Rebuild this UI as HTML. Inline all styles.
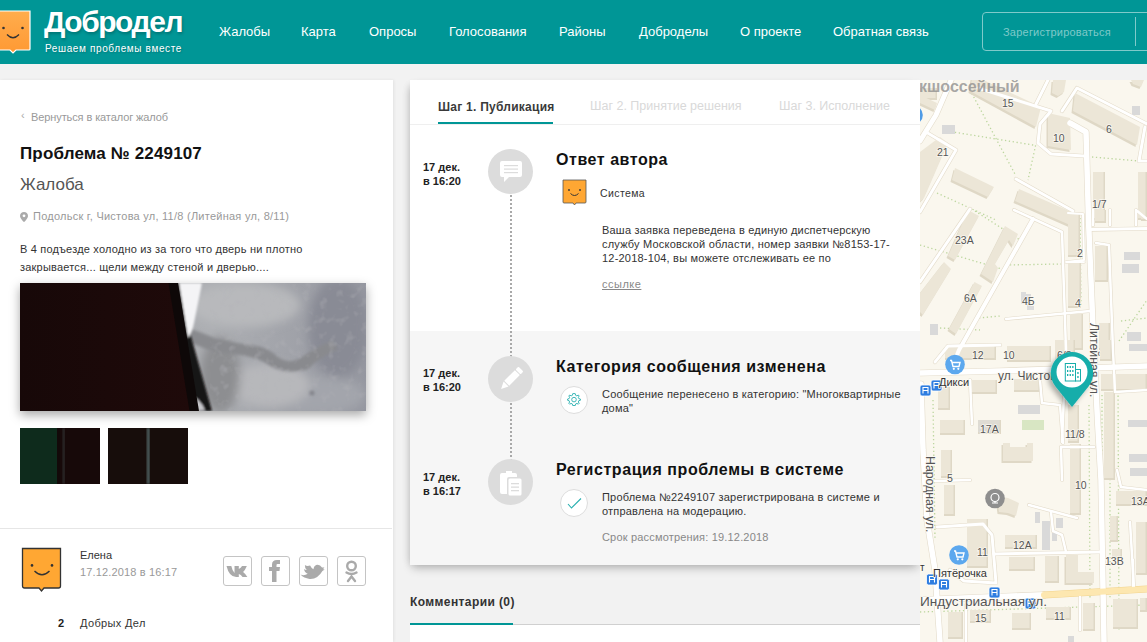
<!DOCTYPE html>
<html><head><meta charset="utf-8">
<style>
*{margin:0;padding:0;box-sizing:border-box}
html,body{width:1147px;height:642px;overflow:hidden;background:#f2f2f2;font-family:"Liberation Sans",sans-serif;color:#222}
.abs{position:absolute}
#hdr{position:absolute;left:0;top:0;width:1147px;height:64px;background:#009696}
.nav{position:absolute;top:24px;font-size:13px;color:#fff;white-space:nowrap}
#left{position:absolute;left:0;top:80px;width:393px;height:562px;background:#fff;box-shadow:1px 0 3px rgba(0,0,0,.07)}
#mid{position:absolute;left:410px;top:80px;width:510px;height:485px;background:#fff;box-shadow:0 5px 9px -2px rgba(0,0,0,.24),-4px 2px 8px -4px rgba(0,0,0,.14)}
#map{position:absolute;left:920px;top:80px;width:227px;height:562px;background:#f8f4e8;overflow:hidden}
.t{position:absolute;white-space:nowrap}
</style></head><body>
<div id="hdr">
  <svg class="abs" style="left:0;top:10px" width="34" height="46" viewBox="0 0 34 46">
    <defs><linearGradient id="og" x1="0" y1="0" x2="0" y2="1"><stop offset="0" stop-color="#ffad4d"/><stop offset="1" stop-color="#ff9933"/></linearGradient></defs>
    <path d="M-2 1 H30 V39 Q30 40 29 40 H16 L13 43 L10 40 H-2 Z" fill="url(#og)" stroke="#fff" stroke-width="1.2"/>
    <circle cx="3.5" cy="18" r="1.3" fill="#333"/><circle cx="22.5" cy="18" r="1.3" fill="#333"/>
    <path d="M7 24.5 Q13 31 19 24.5" fill="none" stroke="#333" stroke-width="1.3"/>
  </svg>
  <div class="t" style="left:44px;top:5px;font-size:30px;font-weight:bold;color:#fff;letter-spacing:-1.45px;text-shadow:1px 2px 3px rgba(0,0,0,.22)">Добродел</div>
  <div class="t" style="left:45px;top:43px;font-size:10px;color:#fff;letter-spacing:0.62px;text-shadow:1px 1px 2px rgba(0,0,0,.2)">Решаем проблемы вместе</div>
  <div class="nav" style="left:219px">Жалобы</div>
  <div class="nav" style="left:301px">Карта</div>
  <div class="nav" style="left:369px">Опросы</div>
  <div class="nav" style="left:449px">Голосования</div>
  <div class="nav" style="left:559px">Районы</div>
  <div class="nav" style="left:639px">Доброделы</div>
  <div class="nav" style="left:740px">О проекте</div>
  <div class="nav" style="left:833px">Обратная связь</div>
  <div class="abs" style="left:982px;top:12px;width:200px;height:39px;border:1px solid #7fcaca;border-radius:4px"></div>
  <div class="abs" style="left:1135px;top:17px;width:1px;height:29px;background:#7fcaca"></div>
  <div class="t" style="left:1003px;top:26px;font-size:11px;color:#7fc9c9;letter-spacing:0.22px">Зарегистрироваться</div>
</div>

<div id="left">
  <div class="t" style="left:21px;top:29px;font-size:11px;color:#aaa">&#8249;</div>
  <div class="t" style="left:31px;top:31px;font-size:11px;color:#999;letter-spacing:-0.1px">Вернуться в каталог жалоб</div>
  <div class="t" style="left:20px;top:64px;font-size:17px;font-weight:bold;color:#111;letter-spacing:0.15px">Проблема № 2249107</div>
  <div class="t" style="left:20px;top:95px;font-size:17px;color:#555">Жалоба</div>
  <svg class="abs" style="left:20px;top:132px" width="8" height="10" viewBox="0 0 8 10"><path d="M4 0C1.8 0 0 1.7 0 3.9 0 6.6 4 10 4 10S8 6.6 8 3.9C8 1.7 6.2 0 4 0Z" fill="#aaa"/><circle cx="4" cy="3.8" r="1.4" fill="#fff"/></svg>
  <div class="t" style="left:33px;top:130px;font-size:11px;color:#999;letter-spacing:0.25px">Подольск г, Чистова ул, 11/8 (Литейная ул, 8/11)</div>
  <div class="t" style="left:20px;top:161px;font-size:11px;color:#333;line-height:17.5px;letter-spacing:0.2px">В 4 подъезде холодно из за того что дверь ни плотно<br>закрывается... щели между стеной и дверью....</div>
  <div class="abs" style="left:20px;top:203px;width:346px;height:128px;box-shadow:0 4px 10px rgba(0,0,0,.35)">
   <svg width="346" height="128" viewBox="0 0 346 128" style="display:block">
    <defs>
     <filter id="bl" x="-20%" y="-20%" width="140%" height="140%"><feGaussianBlur stdDeviation="1.2"/></filter>
     <filter id="bl2" x="-50%" y="-50%" width="200%" height="200%"><feGaussianBlur stdDeviation="5"/></filter>
     <filter id="bl4" x="-50%" y="-50%" width="200%" height="200%"><feGaussianBlur stdDeviation="1.8"/></filter>
     <filter id="tex" x="0" y="0" width="100%" height="100%"><feTurbulence type="fractalNoise" baseFrequency="0.12" numOctaves="2" seed="3"/><feColorMatrix type="matrix" values="0 0 0 0 0.45  0 0 0 0 0.45  0 0 0 0 0.48  0 0 0 -1.6 0.75"/><feGaussianBlur stdDeviation="0.6"/></filter>
     <linearGradient id="wall" x1="0" y1="0" x2="1" y2="0"><stop offset="0" stop-color="#a6a7ab"/><stop offset="0.55" stop-color="#adafb3"/><stop offset="1" stop-color="#9597a0"/></linearGradient>
     <linearGradient id="door" x1="0" y1="0" x2="1" y2="0"><stop offset="0" stop-color="#170808"/><stop offset="1" stop-color="#1f0a0a"/></linearGradient>
    </defs>
    <rect width="346" height="128" fill="url(#wall)"/>
    <g filter="url(#bl2)">
     <ellipse cx="225" cy="22" rx="55" ry="22" fill="#b8b9bc"/>
     <ellipse cx="318" cy="45" rx="30" ry="50" fill="#898b95"/>
     <ellipse cx="300" cy="112" rx="45" ry="18" fill="#a3a5ac"/>
     <ellipse cx="250" cy="102" rx="40" ry="22" fill="#b7b8bb"/>
     <ellipse cx="200" cy="92" rx="20" ry="38" fill="#8d8e91"/>
    </g>
    
    <g filter="url(#bl4)">
     <path d="M166 45 Q180 48 196 56 Q215 60 232 62 Q248 64 258 74 Q270 82 282 74 Q296 64 312 58 L318 66 Q300 74 288 86 Q268 92 252 84 Q238 74 220 72 Q200 70 186 66 L166 58 Z" fill="#898a8e"/>
     <circle cx="292" cy="110" r="2.5" fill="#808188"/>
    </g>
    <rect x="190" y="0" width="156" height="128" filter="url(#tex)" opacity="0.7"/>
    <g filter="url(#bl)">
     <path d="M157 0 L182 0 Q172 25 170 50 L192 128 L169 128 Z" fill="#161212"/>
     <path d="M159 0 L182 0 Q178 20 174 40 Q172 50 168 55 Z" fill="#f4f4f6"/>
     <path d="M170 112 Q180 115 185 127 L176 128 Z" fill="#c8c8cc"/>
    </g>
    <path d="M0 0 L151 0 L172 128 L0 128 Z" fill="url(#door)"/>
    <path d="M148.5 0 L158 0 L179 128 L169.5 128 Z" fill="#0e0808"/>
   </svg>
  </div>
  <svg class="abs" style="left:20px;top:348px" width="80" height="56" viewBox="0 0 80 56">
   <defs><filter id="bl3"><feGaussianBlur stdDeviation="0.8"/></filter></defs>
   <rect width="80" height="56" fill="#130909"/>
   <rect width="37" height="56" fill="#0e2b1c"/>
   <rect x="43" y="0" width="1.5" height="56" fill="#3d4a48" filter="url(#bl3)"/><rect x="40" y="0" width="40" height="56" fill="#2a0c0a" opacity="0.2"/>
  </svg>
  <svg class="abs" style="left:108px;top:348px" width="80" height="56" viewBox="0 0 80 56">
   <rect width="80" height="56" fill="#170d0b"/>
   <rect x="39" y="0" width="2.5" height="56" fill="#55686a" filter="url(#bl3)"/>
  </svg>
  <div class="abs" style="left:0;top:448px;width:392px;height:1px;background:#e6e6e6"></div>
  <svg class="abs" style="left:21px;top:467px" width="42" height="46" viewBox="0 0 42 46">
   <path d="M1.5 1.5 H39.5 V39 Q39.5 41 37.5 41 H23 L20.5 44 L18 41 H3.5 Q1.5 41 1.5 39 Z" fill="#ffa733" stroke="#333" stroke-width="1.3"/>
   <circle cx="11" cy="18.4" r="1.3" fill="#333"/><circle cx="31" cy="18.4" r="1.3" fill="#333"/>
   <path d="M13.5 24 Q21 31.5 28.5 24" fill="none" stroke="#333" stroke-width="1.4"/>
  </svg>
  <div class="t" style="left:80px;top:469px;font-size:11px;color:#333">Елена</div>
  <div class="t" style="left:80px;top:486px;font-size:11px;color:#999;letter-spacing:0.15px">17.12.2018 в 16:17</div>
  <div class="abs" style="left:223px;top:476px;width:29px;height:30px;border:1px solid #c4c4c4;border-radius:3px"></div>
  <div class="abs" style="left:261px;top:476px;width:29px;height:30px;border:1px solid #c4c4c4;border-radius:3px"></div>
  <div class="abs" style="left:299px;top:476px;width:29px;height:30px;border:1px solid #c4c4c4;border-radius:3px"></div>
  <div class="abs" style="left:337px;top:476px;width:29px;height:30px;border:1px solid #c4c4c4;border-radius:3px"></div>
  <svg class="abs" style="left:223px;top:476px" width="144" height="30" viewBox="0 0 144 30">
   <path transform="translate(3.5 0) scale(1.07 1) translate(-3.5 0)" d="M3.5 10 H8 Q9 15 11 17 V10 H15 V13 Q17 12 18 10 H22.5 Q21 14 19 16 Q21.5 18 23 21 H18.5 Q17 18.5 15 18 V21 H12.5 Q6 21 3.5 10Z" fill="#aaa"/>
   <path transform="translate(1 0)" d="M48 26 V15 H45 V11 H48 V8.5 Q48 4 53 4 H56 V8 H53.5 Q52.5 8 52.5 9 V11 H56 L55.5 15 H52.5 V26Z" fill="#aaa"/>
   <path transform="translate(-2.5 -0.5) rotate(12 93 16) translate(93 16) scale(1.15) translate(-93 -16)" d="M89 11.5 Q86.5 13 84.5 12 Q85 15 87 16 Q85.5 16 84.5 15.5 Q85.5 18.5 88.5 19 Q86 21.5 82.5 21 Q86 23.5 91 23 Q98 22 100.5 14 Q101.5 13 102 12 Q101 12.3 100.5 12.3 Q101.5 11.5 101.5 10.5 Q100.5 11 99.5 11 Q97 8.5 94 10 Q92 11.5 92.5 14 Q90.5 13.5 89 11.5Z" fill="#aaa"/>
   <circle cx="128.5" cy="10" r="4.3" fill="none" stroke="#aaa" stroke-width="2.4"/>
   <path d="M123.5 16.5 Q128.5 19.5 133.5 16.5" fill="none" stroke="#aaa" stroke-width="2.4" stroke-linecap="round"/>
   <path d="M125 25 L128.5 20.5 L132 25" fill="none" stroke="#aaa" stroke-width="2.4" stroke-linecap="round"/>
  </svg>
  <div class="t" style="left:58px;top:537px;font-size:11px;font-weight:bold;color:#222">2</div>
  <div class="t" style="left:80px;top:537px;font-size:11px;color:#333;letter-spacing:0.35px">Добрых Дел</div>
</div>
<div id="mid">
  <div class="abs" style="left:0;top:251px;width:510px;height:234px;background:#f6f6f6"></div>
  <div class="t" style="left:28px;top:19.5px;font-size:12px;font-weight:bold;color:#3a3a3a;letter-spacing:0.25px">Шаг 1. Публикация</div>
  <div class="abs" style="left:28px;top:42px;width:115px;height:2px;background:#009696"></div>
  <div class="t" style="left:180px;top:19px;font-size:12.5px;color:#d9d9d9">Шаг 2. Принятие решения</div>
  <div class="t" style="left:369px;top:19px;font-size:12.5px;color:#d9d9d9">Шаг 3. Исполнение</div>
  <div class="abs" style="left:0;top:44px;width:510px;height:1px;background:#efefef"></div>
  <div class="abs" style="left:100px;top:115px;width:2px;height:265px;background:repeating-linear-gradient(to bottom,#a9a9a9 0,#a9a9a9 2px,transparent 2px,transparent 4px)"></div>

  <div class="t" style="left:13px;top:79.5px;font-size:11px;font-weight:bold;color:#222;line-height:14px">17 дек.<br>в 16:20</div>
  <div class="abs" style="left:78px;top:69px;width:45px;height:45px;border-radius:50%;background:#dcdcdc"></div>
  <svg class="abs" style="left:89px;top:80px" width="24" height="26" viewBox="0 0 24 26"><path d="M1 3 Q1 1 3 1 H21 Q23 1 23 3 V15 Q23 17 21 17 H10 L5 22 V17 H3 Q1 17 1 15Z" fill="#fff"/><rect x="5" y="5" width="14" height="1.2" fill="#dcdcdc"/><rect x="5" y="8.5" width="14" height="1.2" fill="#dcdcdc"/><rect x="5" y="12" width="14" height="1.2" fill="#dcdcdc"/></svg>
  <div class="t" style="left:146px;top:71px;font-size:16px;font-weight:bold;color:#111;letter-spacing:0.55px">Ответ автора</div>
  <svg class="abs" style="left:152px;top:99px" width="26" height="28" viewBox="0 0 26 28"><path d="M1 1 H24 V23 Q24 24 23 24 H14 L12.5 26 L11 24 H2 Q1 24 1 23Z" fill="#ffa733" stroke="#555" stroke-width="0.8"/><circle cx="7" cy="11" r="0.9" fill="#333"/><circle cx="18" cy="11" r="0.9" fill="#333"/><path d="M8.5 14.5 Q12.5 18.5 16.5 14.5" fill="none" stroke="#333" stroke-width="1"/></svg>
  <div class="t" style="left:190px;top:107px;font-size:10.5px;color:#333;letter-spacing:0.4px">Система</div>
  <div class="t" style="left:192px;top:143px;font-size:11px;color:#333;line-height:14px;letter-spacing:0.2px">Ваша заявка переведена в единую диспетчерскую<br>службу Московской области, номер заявки №8153-17-<br>12-2018-104, вы можете отслеживать ее по</div>
  <div class="t" style="left:192px;top:198px;font-size:11px;color:#888;text-decoration:underline;letter-spacing:0.5px">ссылке</div>

  <div class="t" style="left:13px;top:286px;font-size:11px;font-weight:bold;color:#222;line-height:14px">17 дек.<br>в 16:20</div>
  <div class="abs" style="left:78px;top:276px;width:45px;height:46px;border-radius:50%;background:#dcdcdc"></div>
  <svg class="abs" style="left:86px;top:284px" width="30" height="30" viewBox="0 0 30 30"><g transform="rotate(45 15 15)"><rect x="11.5" y="1" width="7" height="4" rx="1" fill="#fff"/><rect x="11.5" y="6" width="7" height="15" fill="#fff"/><path d="M11.5 22 H18.5 L15 29 Z" fill="#fff"/></g></svg>
  <div class="t" style="left:146px;top:278px;font-size:16px;font-weight:bold;color:#111;letter-spacing:0.55px">Категория сообщения изменена</div>
  <div class="abs" style="left:150px;top:306px;width:28px;height:28px;border-radius:50%;background:#fff;border:1px solid #ddd"></div>
  <svg class="abs" style="left:156px;top:312px" width="16" height="16" viewBox="0 0 16 16"><path d="M8 1.5 L9.3 1.7 L9.6 3.3 L10.9 3.9 L12.3 3 L13.2 4 L12.3 5.3 L12.8 6.6 L14.4 7 V8.3 L12.8 8.7 L12.3 10 L13.2 11.3 L12.3 12.2 L11 11.4 L9.7 11.9 L9.3 13.5 H8 H6.7 L6.3 11.9 L5 11.4 L3.7 12.2 L2.8 11.3 L3.6 10 L3.1 8.7 L1.6 8.3 V7 L3.1 6.6 L3.6 5.3 L2.8 4 L3.7 3 L5.1 3.9 L6.4 3.3 L6.7 1.7 Z" fill="none" stroke="#2ab0b0" stroke-width="0.9"/><circle cx="8" cy="7.6" r="2.3" fill="none" stroke="#2ab0b0" stroke-width="0.9"/></svg>
  <div class="t" style="left:192px;top:307px;font-size:11px;color:#333;line-height:14px;letter-spacing:0.2px">Сообщение перенесено в категорию: "Многоквартирные<br>дома"</div>

  <div class="t" style="left:13px;top:389.5px;font-size:11px;font-weight:bold;color:#222;line-height:14px">17 дек.<br>в 16:17</div>
  <div class="abs" style="left:78px;top:379px;width:45px;height:46px;border-radius:50%;background:#dcdcdc"></div>
  <svg class="abs" style="left:88px;top:388px" width="26" height="30" viewBox="0 0 26 30"><path d="M2 7 Q2 5 4 5 H8 V3 H14 V5 H17 Q19 5 19 7 V9 H11 Q9 9 9 11 V26 H4 Q2 26 2 24 Z" fill="#fff"/><rect x="10.5" y="10.5" width="13" height="17" rx="1.5" fill="#fff"/><rect x="13" y="15" width="8" height="1.3" fill="#dcdcdc"/><rect x="13" y="18.5" width="8" height="1.3" fill="#dcdcdc"/><rect x="13" y="22" width="8" height="1.3" fill="#dcdcdc"/></svg>
  <div class="t" style="left:146px;top:381px;font-size:16px;font-weight:bold;color:#111;letter-spacing:0.57px">Регистрация проблемы в системе</div>
  <div class="abs" style="left:150px;top:409px;width:28px;height:28px;border-radius:50%;background:#fff;border:1px solid #ddd"></div>
  <svg class="abs" style="left:156px;top:415px" width="16" height="16" viewBox="0 0 16 16"><path d="M2 9 L5.5 13 L15 3.5" fill="none" stroke="#2ab0b0" stroke-width="1.1"/></svg>
  <div class="t" style="left:192px;top:410px;font-size:11px;color:#333;line-height:14px;letter-spacing:0.2px">Проблема №2249107 зарегистрирована в системе и<br>отправлена на модерацию.</div>
  <div class="t" style="left:192px;top:451px;font-size:11px;color:#888;letter-spacing:0.18px">Срок рассмотрения: 19.12.2018</div>
</div>
<div class="t" style="left:410px;top:594.5px;font-size:12px;font-weight:bold;color:#333;letter-spacing:0.4px">Комментарии (0)</div>
<div class="abs" style="left:410px;top:624px;width:510px;height:1px;background:#d0d0d0"></div>
<div class="abs" style="left:410px;top:622.5px;width:103px;height:2.5px;background:#009696"></div>
<div class="abs" style="left:410px;top:625px;width:510px;height:17px;background:#fff"></div>
<div id="map"><svg width="227" height="562" viewBox="920 80 227 562" style="display:block;font-family:'Liberation Sans',sans-serif"><defs><filter id="msh" x="-50%" y="-50%" width="200%" height="200%"><feDropShadow dx="-3" dy="3" stdDeviation="2.5" flood-color="#000" flood-opacity="0.3"/></filter></defs><rect x="920" y="80" width="227" height="562" fill="#faf7ee"/><path d="M954.9 132.3 L1035.6 145.4" fill="none" stroke="#bcd69e" stroke-width="1.3" stroke-dasharray="1.3 2.6"/><path d="M970.0 90.0 L1016.0 176.0" fill="none" stroke="#bcd69e" stroke-width="1.3" stroke-dasharray="1.3 2.6"/><path d="M1035.6 145.4 L1028.0 180.0" fill="none" stroke="#bcd69e" stroke-width="1.3" stroke-dasharray="1.3 2.6"/><path d="M1092.0 157.0 L1139.0 161.0" fill="none" stroke="#bcd69e" stroke-width="1.3" stroke-dasharray="1.3 2.6"/><path d="M937.0 193.0 L996.0 220.0" fill="none" stroke="#bcd69e" stroke-width="1.3" stroke-dasharray="1.3 2.6"/><path d="M975.0 211.0 L1020.0 240.0" fill="none" stroke="#bcd69e" stroke-width="1.3" stroke-dasharray="1.3 2.6"/><path d="M920.0 245.0 L1005.0 270.0" fill="none" stroke="#bcd69e" stroke-width="1.3" stroke-dasharray="1.3 2.6"/><path d="M1006.0 265.0 L1061.0 264.0" fill="none" stroke="#bcd69e" stroke-width="1.3" stroke-dasharray="1.3 2.6"/><path d="M940.0 328.0 L980.0 330.0" fill="none" stroke="#bcd69e" stroke-width="1.3" stroke-dasharray="1.3 2.6"/><path d="M979.0 318.0 L1000.0 316.0" fill="none" stroke="#bcd69e" stroke-width="1.3" stroke-dasharray="1.3 2.6"/><path d="M1121.0 321.0 L1147.0 318.0" fill="none" stroke="#bcd69e" stroke-width="1.3" stroke-dasharray="1.3 2.6"/><path d="M1119.0 341.0 L1147.0 300.0" fill="none" stroke="#bcd69e" stroke-width="1.3" stroke-dasharray="1.3 2.6"/><path d="M1080.0 218.0 L1081.0 306.0" fill="none" stroke="#bcd69e" stroke-width="1.3" stroke-dasharray="1.3 2.6"/><path d="M1102.0 395.0 L1102.0 480.0" fill="none" stroke="#bcd69e" stroke-width="1.3" stroke-dasharray="1.3 2.6"/><path d="M1089.0 405.0 L1090.0 600.0" fill="none" stroke="#bcd69e" stroke-width="1.3" stroke-dasharray="1.3 2.6"/><path d="M1118.0 380.0 L1119.0 630.0" fill="none" stroke="#bcd69e" stroke-width="1.3" stroke-dasharray="1.3 2.6"/><path d="M933.0 400.0 L935.0 540.0" fill="none" stroke="#bcd69e" stroke-width="1.3" stroke-dasharray="1.3 2.6"/><path d="M920.0 598.0 L1147.0 590.0" fill="none" stroke="#bcd69e" stroke-width="1.3" stroke-dasharray="1.3 2.6"/><path d="M920.0 612.0 L1147.0 605.0" fill="none" stroke="#bcd69e" stroke-width="1.3" stroke-dasharray="1.3 2.6"/><path d="M1110.0 440.0 L1110.0 600.0" fill="none" stroke="#bcd69e" stroke-width="1.3" stroke-dasharray="1.3 2.6"/><path d="M1141.0 180.0 L1141.0 220.0" fill="none" stroke="#bcd69e" stroke-width="1.3" stroke-dasharray="1.3 2.6"/><path d="M952.0 78.0 L936.0 115.0 L920.0 141.0" fill="none" stroke="#e4dccb" stroke-width="6.2" stroke-linejoin="round" stroke-linecap="round"/><path d="M926.0 132.0 L956.0 150.0 L920.0 212.0" fill="none" stroke="#e4dccb" stroke-width="4.2" stroke-linejoin="round" stroke-linecap="round"/><path d="M1036.0 104.0 L1049.0 78.0" fill="none" stroke="#e4dccb" stroke-width="4.2" stroke-linejoin="round" stroke-linecap="round"/><path d="M978.0 88.0 L1051.0 111.0 L1040.0 124.0 L1038.0 143.0 L1051.0 154.0 L1084.0 156.0" fill="none" stroke="#e4dccb" stroke-width="4.2" stroke-linejoin="round" stroke-linecap="round"/><path d="M1070.0 123.0 L1086.0 132.0 L1088.5 220.0 L1093.5 340.0 L1097.5 420.0 L1101.0 480.0 L1104.0 642.0" fill="none" stroke="#e4dccb" stroke-width="6.7" stroke-linejoin="round" stroke-linecap="round"/><path d="M1062.0 111.0 L1077.0 88.0 L1147.0 124.0" fill="none" stroke="#e4dccb" stroke-width="4.2" stroke-linejoin="round" stroke-linecap="round"/><path d="M1145.0 127.0 L1139.0 161.0 L1147.0 161.0" fill="none" stroke="#e4dccb" stroke-width="4.2" stroke-linejoin="round" stroke-linecap="round"/><path d="M1016.0 179.0 L1073.0 211.0" fill="none" stroke="#e4dccb" stroke-width="4.2" stroke-linejoin="round" stroke-linecap="round"/><path d="M1014.0 210.0 L1062.0 232.0 L1066.0 350.0 L1062.0 442.0" fill="none" stroke="#e4dccb" stroke-width="3.7" stroke-linejoin="round" stroke-linecap="round"/><path d="M920.0 282.0 L970.0 209.0" fill="none" stroke="#e4dccb" stroke-width="4.2" stroke-linejoin="round" stroke-linecap="round"/><path d="M1033.0 219.0 L959.0 350.0 L950.0 372.0" fill="none" stroke="#e4dccb" stroke-width="5.2" stroke-linejoin="round" stroke-linecap="round"/><path d="M1006.0 319.0 L1090.0 311.0" fill="none" stroke="#e4dccb" stroke-width="3.7" stroke-linejoin="round" stroke-linecap="round"/><path d="M1090.0 229.6 L1147.0 228.5" fill="none" stroke="#e4dccb" stroke-width="4.2" stroke-linejoin="round" stroke-linecap="round"/><path d="M1096.0 243.0 L1109.0 245.0 L1113.0 350.0 L1115.0 392.0 L1147.0 390.0" fill="none" stroke="#e4dccb" stroke-width="3.7" stroke-linejoin="round" stroke-linecap="round"/><path d="M1093.0 225.0 L1093.0 210.0" fill="none" stroke="#e4dccb" stroke-width="3.7" stroke-linejoin="round" stroke-linecap="round"/><path d="M1110.0 225.0 L1110.0 210.0" fill="none" stroke="#e4dccb" stroke-width="3.7" stroke-linejoin="round" stroke-linecap="round"/><path d="M1136.0 225.0 L1136.0 210.0 L1147.0 219.0" fill="none" stroke="#e4dccb" stroke-width="3.7" stroke-linejoin="round" stroke-linecap="round"/><path d="M1068.0 213.0 L1083.0 214.0 L1084.0 260.0 L1066.0 262.0 L1084.0 262.0" fill="none" stroke="#e4dccb" stroke-width="3.2" stroke-linejoin="round" stroke-linecap="round"/><path d="M920.0 373.0 L1000.0 371.0 L1147.0 366.0" fill="none" stroke="#e4dccb" stroke-width="6.7" stroke-linejoin="round" stroke-linecap="round"/><path d="M935.0 362.0 L948.0 346.0 L1000.0 345.0" fill="none" stroke="#e4dccb" stroke-width="4.2" stroke-linejoin="round" stroke-linecap="round"/><path d="M970.0 380.0 L972.0 424.0" fill="none" stroke="#e4dccb" stroke-width="3.7" stroke-linejoin="round" stroke-linecap="round"/><path d="M1040.0 380.0 L1042.0 403.0 L1060.0 405.0 L1063.0 443.0" fill="none" stroke="#e4dccb" stroke-width="3.7" stroke-linejoin="round" stroke-linecap="round"/><path d="M1061.0 447.0 L1094.0 447.0" fill="none" stroke="#e4dccb" stroke-width="3.7" stroke-linejoin="round" stroke-linecap="round"/><path d="M1061.0 447.0 L1062.0 480.0" fill="none" stroke="#e4dccb" stroke-width="3.7" stroke-linejoin="round" stroke-linecap="round"/><path d="M921.0 384.0 L923.0 450.0 L927.0 520.0 L935.0 570.0 L940.0 642.0" fill="none" stroke="#e4dccb" stroke-width="6.7" stroke-linejoin="round" stroke-linecap="round"/><path d="M935.0 481.0 L970.0 480.0" fill="none" stroke="#e4dccb" stroke-width="3.7" stroke-linejoin="round" stroke-linecap="round"/><path d="M1029.0 505.0 L1077.0 518.0" fill="none" stroke="#e4dccb" stroke-width="3.7" stroke-linejoin="round" stroke-linecap="round"/><path d="M1051.0 512.0 L1053.0 531.0 L1062.0 535.0 L1066.0 552.0" fill="none" stroke="#e4dccb" stroke-width="3.7" stroke-linejoin="round" stroke-linecap="round"/><path d="M994.0 554.0 L1099.0 552.0" fill="none" stroke="#e4dccb" stroke-width="4.2" stroke-linejoin="round" stroke-linecap="round"/><path d="M937.0 527.0 L983.0 524.0 L992.0 535.0 L996.0 583.0 L964.0 581.0 L950.0 570.0" fill="none" stroke="#e4dccb" stroke-width="4.2" stroke-linejoin="round" stroke-linecap="round"/><path d="M1117.0 470.0 L1121.0 487.0 L1147.0 490.0" fill="none" stroke="#e4dccb" stroke-width="3.7" stroke-linejoin="round" stroke-linecap="round"/><path d="M1130.0 522.0 L1134.0 588.0" fill="none" stroke="#e4dccb" stroke-width="3.7" stroke-linejoin="round" stroke-linecap="round"/><path d="M966.0 605.0 L966.0 642.0" fill="none" stroke="#e4dccb" stroke-width="3.7" stroke-linejoin="round" stroke-linecap="round"/><path d="M1080.0 597.0 L1080.0 630.0" fill="none" stroke="#e4dccb" stroke-width="3.7" stroke-linejoin="round" stroke-linecap="round"/><path d="M1133.0 560.0 L1133.0 590.0" fill="none" stroke="#e4dccb" stroke-width="3.7" stroke-linejoin="round" stroke-linecap="round"/><path d="M920.0 600.0 L1044.0 595.0" fill="none" stroke="#e4dccb" stroke-width="7.2" stroke-linejoin="round" stroke-linecap="round"/><path d="M1044.0 595.0 L1147.0 589.0" fill="none" stroke="#f2d48f" stroke-width="7.2" stroke-linejoin="round" stroke-linecap="round"/><polygon points="977.5,80.0 1039.5,109.0 1034.5,129.0 968.5,93.0 970.5,80.0" fill="#dfd8c6"/><polygon points="979.0,78.0 1041.0,107.0 1036.0,127.0 970.0,91.0 972.0,78.0" fill="#ece6d7"/><polygon points="1046.5,115.0 1068.5,120.0 1069.5,152.0 1046.5,148.0" fill="#dfd8c6"/><polygon points="1048.0,113.0 1070.0,118.0 1071.0,150.0 1048.0,146.0" fill="#ece6d7"/><polygon points="1073.5,95.0 1138.5,129.0 1135.5,147.0 1071.5,113.0" fill="#dfd8c6"/><polygon points="1075.0,93.0 1140.0,127.0 1137.0,145.0 1073.0,111.0" fill="#ece6d7"/><polygon points="938.5,139.0 946.5,145.0 922.5,200.0 918.5,204.0 918.5,154.0" fill="#dfd8c6"/><polygon points="940.0,137.0 948.0,143.0 924.0,198.0 920.0,202.0 920.0,152.0" fill="#ece6d7"/><polygon points="953.5,170.0 992.5,189.0 986.5,199.0 950.5,182.0" fill="#dfd8c6"/><polygon points="955.0,168.0 994.0,187.0 988.0,197.0 952.0,180.0" fill="#ece6d7"/><polygon points="1017.5,191.0 1072.5,215.0 1068.5,227.0 1013.5,203.0" fill="#dfd8c6"/><polygon points="1019.0,189.0 1074.0,213.0 1070.0,225.0 1015.0,201.0" fill="#ece6d7"/><rect x="1093.0" y="172.0" width="12.0" height="48.0" fill="#dfd8c6"/><rect x="1093.0" y="172.0" width="10.5" height="46.0" fill="#ece6d7"/><rect x="1138.0" y="172.0" width="9.0" height="48.0" fill="#dfd8c6"/><rect x="1138.0" y="172.0" width="7.5" height="46.0" fill="#ece6d7"/><rect x="1132.0" y="106.0" width="8.0" height="9.0" fill="#d9d9d9"/><rect x="942.0" y="125.0" width="13.0" height="9.0" fill="#d9d9d9"/><polygon points="966.5,212.0 977.5,218.0 953.5,262.0 946.5,258.0" fill="#dfd8c6"/><polygon points="968.0,210.0 979.0,216.0 955.0,260.0 948.0,256.0" fill="#ece6d7"/><polygon points="942.5,264.0 949.5,271.0 921.5,317.0 918.5,314.0 918.5,295.0" fill="#dfd8c6"/><polygon points="944.0,262.0 951.0,269.0 923.0,315.0 920.0,312.0 920.0,293.0" fill="#ece6d7"/><polygon points="973.0,284.0 980.5,288.0 954.5,336.0 947.5,331.0" fill="#dfd8c6"/><polygon points="974.5,282.0 982.0,286.0 956.0,334.0 949.0,329.0" fill="#ece6d7"/><polygon points="1003.5,228.0 1016.5,236.0 1011.5,248.0 1007.5,242.0 993.5,266.0 996.5,270.0 991.5,284.0 979.5,276.0" fill="#dfd8c6"/><polygon points="1005.0,226.0 1018.0,234.0 1013.0,246.0 1009.0,240.0 995.0,264.0 998.0,268.0 993.0,282.0 981.0,274.0" fill="#ece6d7"/><rect x="1068.0" y="214.0" width="12.0" height="43.0" fill="#dfd8c6"/><rect x="1068.0" y="214.0" width="10.5" height="41.0" fill="#ece6d7"/><rect x="1068.0" y="262.0" width="13.0" height="46.0" fill="#dfd8c6"/><rect x="1068.0" y="262.0" width="11.5" height="44.0" fill="#ece6d7"/><rect x="1070.0" y="314.0" width="13.0" height="36.0" fill="#dfd8c6"/><rect x="1070.0" y="314.0" width="11.5" height="34.0" fill="#ece6d7"/><rect x="1095.0" y="246.0" width="13.0" height="36.0" fill="#dfd8c6"/><rect x="1095.0" y="246.0" width="11.5" height="34.0" fill="#ece6d7"/><rect x="1099.0" y="323.0" width="11.0" height="27.0" fill="#dfd8c6"/><rect x="1099.0" y="323.0" width="9.5" height="25.0" fill="#ece6d7"/><rect x="1124.0" y="252.0" width="16.0" height="8.0" fill="#d9d9d9"/><rect x="1122.0" y="264.0" width="17.0" height="9.0" fill="#d9d9d9"/><rect x="1127.0" y="332.0" width="14.0" height="9.0" fill="#d9d9d9"/><rect x="1095.0" y="210.0" width="11.0" height="13.0" fill="#dfd8c6"/><rect x="1095.0" y="210.0" width="9.5" height="11.0" fill="#ece6d7"/><rect x="1141.0" y="210.0" width="6.0" height="11.0" fill="#dfd8c6"/><rect x="1141.0" y="210.0" width="4.5" height="9.0" fill="#ece6d7"/><polygon points="1021.0,292.0 1026.0,292.0 1026.0,294.0 1031.0,294.0 1031.0,306.0 1034.0,306.0 1034.0,310.0 1027.0,310.0 1027.0,304.0 1021.0,304.0" fill="#dcdcdc"/><rect x="930.0" y="324.0" width="8.0" height="11.0" fill="#d9d9d9"/><rect x="945.0" y="346.0" width="51.0" height="14.0" fill="#dfd8c6"/><rect x="945.0" y="346.0" width="49.5" height="12.0" fill="#ece6d7"/><rect x="1007.0" y="346.0" width="44.0" height="16.0" fill="#dfd8c6"/><rect x="1007.0" y="346.0" width="42.5" height="14.0" fill="#ece6d7"/><rect x="1055.0" y="340.0" width="20.0" height="22.0" fill="#dfd8c6"/><rect x="1055.0" y="340.0" width="18.5" height="20.0" fill="#ece6d7"/><rect x="971.0" y="380.0" width="26.0" height="14.0" fill="#dfd8c6"/><rect x="971.0" y="380.0" width="24.5" height="12.0" fill="#ece6d7"/><rect x="1014.0" y="379.0" width="26.0" height="13.0" fill="#dfd8c6"/><rect x="1014.0" y="379.0" width="24.5" height="11.0" fill="#ece6d7"/><rect x="938.0" y="387.0" width="12.0" height="23.0" fill="#dfd8c6"/><rect x="938.0" y="387.0" width="10.5" height="21.0" fill="#ece6d7"/><rect x="940.0" y="420.0" width="25.0" height="15.0" fill="#dfd8c6"/><rect x="940.0" y="420.0" width="23.5" height="13.0" fill="#ece6d7"/><rect x="978.0" y="420.0" width="23.0" height="14.0" fill="#dfd8c6"/><rect x="978.0" y="420.0" width="21.5" height="12.0" fill="#dedbd3"/><rect x="1018.0" y="405.0" width="22.0" height="9.0" fill="#d9d9d9"/><rect x="1022.0" y="420.0" width="22.0" height="10.0" fill="#d8e6c3"/><polygon points="1001.5,445.0 1008.5,445.0 1008.5,449.0 1025.5,449.0 1025.5,445.0 1031.5,445.0 1031.5,463.0 1001.5,463.0" fill="#dfd8c6"/><polygon points="1003.0,443.0 1010.0,443.0 1010.0,447.0 1027.0,447.0 1027.0,443.0 1033.0,443.0 1033.0,461.0 1003.0,461.0" fill="#ece6d7"/><rect x="1068.0" y="405.0" width="11.0" height="38.0" fill="#dfd8c6"/><rect x="1068.0" y="405.0" width="9.5" height="36.0" fill="#ece6d7"/><rect x="1070.0" y="444.0" width="11.0" height="71.0" fill="#dfd8c6"/><rect x="1070.0" y="444.0" width="9.5" height="69.0" fill="#ece6d7"/><rect x="1101.0" y="374.0" width="46.0" height="17.0" fill="#dfd8c6"/><rect x="1101.0" y="374.0" width="44.5" height="15.0" fill="#ece6d7"/><rect x="1104.0" y="392.0" width="11.0" height="88.0" fill="#dfd8c6"/><rect x="1104.0" y="392.0" width="9.5" height="86.0" fill="#ece6d7"/><rect x="1128.0" y="420.0" width="19.0" height="7.0" fill="#d9d9d9"/><rect x="1129.0" y="454.0" width="18.0" height="8.0" fill="#d9d9d9"/><rect x="1130.0" y="468.0" width="17.0" height="8.0" fill="#d9d9d9"/><rect x="1129.0" y="344.0" width="18.0" height="7.0" fill="#d9d9d9"/><rect x="1100.0" y="340.0" width="12.0" height="21.0" fill="#dfd8c6"/><rect x="1100.0" y="340.0" width="10.5" height="19.0" fill="#ece6d7"/><rect x="944.0" y="485.0" width="11.0" height="31.0" fill="#dfd8c6"/><rect x="944.0" y="485.0" width="9.5" height="29.0" fill="#ece6d7"/><rect x="941.0" y="450.0" width="11.0" height="28.0" fill="#dfd8c6"/><rect x="941.0" y="450.0" width="9.5" height="26.0" fill="#ece6d7"/><polygon points="995.5,498.0 1006.5,500.0 1017.5,505.0 1014.5,518.0 1006.5,515.0 997.5,514.0" fill="#dfd8c6"/><polygon points="997.0,496.0 1008.0,498.0 1019.0,503.0 1016.0,516.0 1008.0,513.0 999.0,512.0" fill="#ece6d7"/><rect x="1035.0" y="512.0" width="5.0" height="11.0" fill="#d9d9d9"/><rect x="1042.0" y="521.0" width="8.0" height="29.0" fill="#d9d9d9"/><rect x="1056.0" y="518.0" width="7.0" height="10.0" fill="#d9d9d9"/><rect x="1052.0" y="533.0" width="5.0" height="8.0" fill="#d9d9d9"/><rect x="1005.0" y="535.0" width="32.0" height="14.0" fill="#dfd8c6"/><rect x="1005.0" y="535.0" width="30.5" height="12.0" fill="#ece6d7"/><rect x="967.0" y="519.0" width="21.0" height="49.0" fill="#dfd8c6"/><rect x="967.0" y="519.0" width="19.5" height="47.0" fill="#ece6d7"/><rect x="1110.0" y="516.0" width="8.0" height="26.0" fill="#dfd8c6"/><rect x="1110.0" y="516.0" width="6.5" height="24.0" fill="#ece6d7"/><rect x="1112.0" y="549.0" width="10.0" height="10.0" fill="#dfd8c6"/><rect x="1112.0" y="549.0" width="8.5" height="8.0" fill="#ece6d7"/><rect x="1116.0" y="491.0" width="31.0" height="15.0" fill="#dfd8c6"/><rect x="1116.0" y="491.0" width="29.5" height="13.0" fill="#ece6d7"/><rect x="1136.0" y="522.0" width="11.0" height="53.0" fill="#dfd8c6"/><rect x="1136.0" y="522.0" width="9.5" height="51.0" fill="#ece6d7"/><rect x="1009.0" y="557.0" width="26.0" height="14.0" fill="#dfd8c6"/><rect x="1009.0" y="557.0" width="24.5" height="12.0" fill="#ece6d7"/><rect x="1045.0" y="556.0" width="14.0" height="27.0" fill="#dfd8c6"/><rect x="1045.0" y="556.0" width="12.5" height="25.0" fill="#ece6d7"/><polygon points="1064.5,557.0 1076.5,557.0 1076.5,574.0 1092.5,574.0 1092.5,585.0 1064.5,585.0" fill="#dfd8c6"/><polygon points="1066.0,555.0 1078.0,555.0 1078.0,572.0 1094.0,572.0 1094.0,583.0 1066.0,583.0" fill="#ece6d7"/><rect x="970.0" y="610.0" width="21.0" height="13.0" fill="#dfd8c6"/><rect x="970.0" y="610.0" width="19.5" height="11.0" fill="#ece6d7"/><rect x="948.0" y="612.0" width="15.0" height="27.0" fill="#dfd8c6"/><rect x="948.0" y="612.0" width="13.5" height="25.0" fill="#ece6d7"/><rect x="1012.0" y="613.0" width="19.0" height="17.0" fill="#dfd8c6"/><rect x="1012.0" y="613.0" width="17.5" height="15.0" fill="#ece6d7"/><rect x="1046.0" y="607.0" width="25.0" height="13.0" fill="#dfd8c6"/><rect x="1046.0" y="607.0" width="23.5" height="11.0" fill="#ece6d7"/><rect x="1083.0" y="603.0" width="12.0" height="28.0" fill="#dfd8c6"/><rect x="1083.0" y="603.0" width="10.5" height="26.0" fill="#ece6d7"/><rect x="1113.0" y="599.0" width="25.0" height="30.0" fill="#dfd8c6"/><rect x="1113.0" y="599.0" width="23.5" height="28.0" fill="#ece6d7"/><rect x="1140.0" y="598.0" width="7.0" height="14.0" fill="#dfd8c6"/><rect x="1140.0" y="598.0" width="5.5" height="12.0" fill="#ece6d7"/><rect x="1068.0" y="636.0" width="6.0" height="6.0" fill="#d9d9d9"/><rect x="920.0" y="88.0" width="17.0" height="12.0" fill="#dfd8c6"/><rect x="920.0" y="88.0" width="15.5" height="10.0" fill="#ece6d7"/><polygon points="1051.5,82.0 1064.5,82.0 1062.5,94.0 1056.5,98.0 1050.5,95.0" fill="#dfd8c6"/><polygon points="1053.0,80.0 1066.0,80.0 1064.0,92.0 1058.0,96.0 1052.0,93.0" fill="#ece6d7"/><polygon points="1129.5,82.0 1142.5,82.0 1139.5,89.0 1131.5,86.0" fill="#dfd8c6"/><polygon points="1131.0,80.0 1144.0,80.0 1141.0,87.0 1133.0,84.0" fill="#ece6d7"/><polygon points="918.5,97.0 935.5,105.0 933.5,112.0 918.5,105.0" fill="#dfd8c6"/><polygon points="920.0,95.0 937.0,103.0 935.0,110.0 920.0,103.0" fill="#ece6d7"/><path d="M952.0 78.0 L936.0 115.0 L920.0 141.0" fill="none" stroke="#fff" stroke-width="5" stroke-linejoin="round" stroke-linecap="round"/><path d="M926.0 132.0 L956.0 150.0 L920.0 212.0" fill="none" stroke="#fff" stroke-width="3" stroke-linejoin="round" stroke-linecap="round"/><path d="M1036.0 104.0 L1049.0 78.0" fill="none" stroke="#fff" stroke-width="3" stroke-linejoin="round" stroke-linecap="round"/><path d="M978.0 88.0 L1051.0 111.0 L1040.0 124.0 L1038.0 143.0 L1051.0 154.0 L1084.0 156.0" fill="none" stroke="#fff" stroke-width="3" stroke-linejoin="round" stroke-linecap="round"/><path d="M1070.0 123.0 L1086.0 132.0 L1088.5 220.0 L1093.5 340.0 L1097.5 420.0 L1101.0 480.0 L1104.0 642.0" fill="none" stroke="#fff" stroke-width="5.5" stroke-linejoin="round" stroke-linecap="round"/><path d="M1062.0 111.0 L1077.0 88.0 L1147.0 124.0" fill="none" stroke="#fff" stroke-width="3" stroke-linejoin="round" stroke-linecap="round"/><path d="M1145.0 127.0 L1139.0 161.0 L1147.0 161.0" fill="none" stroke="#fff" stroke-width="3" stroke-linejoin="round" stroke-linecap="round"/><path d="M1016.0 179.0 L1073.0 211.0" fill="none" stroke="#fff" stroke-width="3" stroke-linejoin="round" stroke-linecap="round"/><path d="M1014.0 210.0 L1062.0 232.0 L1066.0 350.0 L1062.0 442.0" fill="none" stroke="#fff" stroke-width="2.5" stroke-linejoin="round" stroke-linecap="round"/><path d="M920.0 282.0 L970.0 209.0" fill="none" stroke="#fff" stroke-width="3" stroke-linejoin="round" stroke-linecap="round"/><path d="M1033.0 219.0 L959.0 350.0 L950.0 372.0" fill="none" stroke="#fff" stroke-width="4" stroke-linejoin="round" stroke-linecap="round"/><path d="M1006.0 319.0 L1090.0 311.0" fill="none" stroke="#fff" stroke-width="2.5" stroke-linejoin="round" stroke-linecap="round"/><path d="M1090.0 229.6 L1147.0 228.5" fill="none" stroke="#fff" stroke-width="3" stroke-linejoin="round" stroke-linecap="round"/><path d="M1096.0 243.0 L1109.0 245.0 L1113.0 350.0 L1115.0 392.0 L1147.0 390.0" fill="none" stroke="#fff" stroke-width="2.5" stroke-linejoin="round" stroke-linecap="round"/><path d="M1093.0 225.0 L1093.0 210.0" fill="none" stroke="#fff" stroke-width="2.5" stroke-linejoin="round" stroke-linecap="round"/><path d="M1110.0 225.0 L1110.0 210.0" fill="none" stroke="#fff" stroke-width="2.5" stroke-linejoin="round" stroke-linecap="round"/><path d="M1136.0 225.0 L1136.0 210.0 L1147.0 219.0" fill="none" stroke="#fff" stroke-width="2.5" stroke-linejoin="round" stroke-linecap="round"/><path d="M1068.0 213.0 L1083.0 214.0 L1084.0 260.0 L1066.0 262.0 L1084.0 262.0" fill="none" stroke="#fff" stroke-width="2" stroke-linejoin="round" stroke-linecap="round"/><path d="M920.0 373.0 L1000.0 371.0 L1147.0 366.0" fill="none" stroke="#fff" stroke-width="5.5" stroke-linejoin="round" stroke-linecap="round"/><path d="M935.0 362.0 L948.0 346.0 L1000.0 345.0" fill="none" stroke="#fff" stroke-width="3" stroke-linejoin="round" stroke-linecap="round"/><path d="M970.0 380.0 L972.0 424.0" fill="none" stroke="#fff" stroke-width="2.5" stroke-linejoin="round" stroke-linecap="round"/><path d="M1040.0 380.0 L1042.0 403.0 L1060.0 405.0 L1063.0 443.0" fill="none" stroke="#fff" stroke-width="2.5" stroke-linejoin="round" stroke-linecap="round"/><path d="M1061.0 447.0 L1094.0 447.0" fill="none" stroke="#fff" stroke-width="2.5" stroke-linejoin="round" stroke-linecap="round"/><path d="M1061.0 447.0 L1062.0 480.0" fill="none" stroke="#fff" stroke-width="2.5" stroke-linejoin="round" stroke-linecap="round"/><path d="M921.0 384.0 L923.0 450.0 L927.0 520.0 L935.0 570.0 L940.0 642.0" fill="none" stroke="#fff" stroke-width="5.5" stroke-linejoin="round" stroke-linecap="round"/><path d="M935.0 481.0 L970.0 480.0" fill="none" stroke="#fff" stroke-width="2.5" stroke-linejoin="round" stroke-linecap="round"/><path d="M1029.0 505.0 L1077.0 518.0" fill="none" stroke="#fff" stroke-width="2.5" stroke-linejoin="round" stroke-linecap="round"/><path d="M1051.0 512.0 L1053.0 531.0 L1062.0 535.0 L1066.0 552.0" fill="none" stroke="#fff" stroke-width="2.5" stroke-linejoin="round" stroke-linecap="round"/><path d="M994.0 554.0 L1099.0 552.0" fill="none" stroke="#fff" stroke-width="3" stroke-linejoin="round" stroke-linecap="round"/><path d="M937.0 527.0 L983.0 524.0 L992.0 535.0 L996.0 583.0 L964.0 581.0 L950.0 570.0" fill="none" stroke="#fff" stroke-width="3" stroke-linejoin="round" stroke-linecap="round"/><path d="M1117.0 470.0 L1121.0 487.0 L1147.0 490.0" fill="none" stroke="#fff" stroke-width="2.5" stroke-linejoin="round" stroke-linecap="round"/><path d="M1130.0 522.0 L1134.0 588.0" fill="none" stroke="#fff" stroke-width="2.5" stroke-linejoin="round" stroke-linecap="round"/><path d="M966.0 605.0 L966.0 642.0" fill="none" stroke="#fff" stroke-width="2.5" stroke-linejoin="round" stroke-linecap="round"/><path d="M1080.0 597.0 L1080.0 630.0" fill="none" stroke="#fff" stroke-width="2.5" stroke-linejoin="round" stroke-linecap="round"/><path d="M1133.0 560.0 L1133.0 590.0" fill="none" stroke="#fff" stroke-width="2.5" stroke-linejoin="round" stroke-linecap="round"/><path d="M920.0 600.0 L1044.0 595.0" fill="none" stroke="#ffffff" stroke-width="6" stroke-linejoin="round" stroke-linecap="round"/><path d="M1044.0 595.0 L1147.0 589.0" fill="none" stroke="#fde7b0" stroke-width="6" stroke-linejoin="round" stroke-linecap="round"/><circle cx="955" cy="364.5" r="9.8" fill="#5ca8ee"/><path d="M950 360.5 H951.5 L953 366.5 H959 L960 362.5 H952.2" fill="none" stroke="#fff" stroke-width="1.4"/><circle cx="953.8" cy="368.8" r="1.1" fill="#fff"/><circle cx="958.3" cy="368.8" r="1.1" fill="#fff"/><circle cx="959" cy="555" r="9.8" fill="#5ca8ee"/><path d="M954 551 H955.5 L957 557 H963 L964 553 H956.2" fill="none" stroke="#fff" stroke-width="1.4"/><circle cx="957.8" cy="559.3" r="1.1" fill="#fff"/><circle cx="962.3" cy="559.3" r="1.1" fill="#fff"/><rect x="931" y="380" width="11" height="11" rx="2" fill="#2e7de0" stroke="#fff" stroke-width="0.8"/><path d="M934 388.5 V382.5 H939 V388.5 M934 385.5 H939" stroke="#fff" stroke-width="1.1" fill="none"/><rect x="920" y="385" width="11" height="11" rx="2" fill="#2e7de0" stroke="#fff" stroke-width="0.8"/><path d="M923 393.5 V387.5 H928 V393.5 M923 390.5 H928" stroke="#fff" stroke-width="1.1" fill="none"/><rect x="926.5" y="574" width="11" height="11" rx="2" fill="#2e7de0" stroke="#fff" stroke-width="0.8"/><path d="M929.5 582.5 V576.5 H934.5 V582.5 M929.5 579.5 H934.5" stroke="#fff" stroke-width="1.1" fill="none"/><rect x="938.5" y="579" width="11" height="11" rx="2" fill="#2e7de0" stroke="#fff" stroke-width="0.8"/><path d="M941.5 587.5 V581.5 H946.5 V587.5 M941.5 584.5 H946.5" stroke="#fff" stroke-width="1.1" fill="none"/><rect x="989" y="587" width="11" height="11" rx="2" fill="#2e7de0" stroke="#fff" stroke-width="0.8"/><path d="M992 595.5 V589.5 H997 V595.5 M992 592.5 H997" stroke="#fff" stroke-width="1.1" fill="none"/><rect x="1025" y="598" width="11" height="11" rx="2" fill="#2e7de0" stroke="#fff" stroke-width="0.8"/><path d="M1028 606.5 V600.5 H1033 V606.5 M1028 603.5 H1033" stroke="#fff" stroke-width="1.1" fill="none"/><circle cx="913" cy="115" r="9.8" fill="#4f9be6"/><circle cx="995" cy="498.5" r="9.8" fill="#8e8e8e"/><circle cx="995" cy="497.5" r="4" fill="none" stroke="#fff" stroke-width="1.2"/><path d="M992 503 H998 M995 501.5 V503" stroke="#fff" stroke-width="1.2"/><text x="919" y="92" font-size="16" fill="#8c8c8c" fill-opacity="0.75" font-weight="bold" text-anchor="start">кшоссейный</text><text x="1002" y="107" font-size="10.5" fill="#555" fill-opacity="1" font-weight="normal" text-anchor="start" stroke="#fdfbf5" stroke-width="1.6" stroke-opacity="0.8" paint-order="stroke">15</text><text x="1053" y="142" font-size="10.5" fill="#555" fill-opacity="1" font-weight="normal" text-anchor="start" stroke="#fdfbf5" stroke-width="1.6" stroke-opacity="0.8" paint-order="stroke">10</text><text x="1106" y="133" font-size="10.5" fill="#555" fill-opacity="1" font-weight="normal" text-anchor="start" stroke="#fdfbf5" stroke-width="1.6" stroke-opacity="0.8" paint-order="stroke">6</text><text x="937" y="156" font-size="10.5" fill="#555" fill-opacity="1" font-weight="normal" text-anchor="start" stroke="#fdfbf5" stroke-width="1.6" stroke-opacity="0.8" paint-order="stroke">21</text><text x="1092" y="208" font-size="10.5" fill="#555" fill-opacity="1" font-weight="normal" text-anchor="start" stroke="#fdfbf5" stroke-width="1.6" stroke-opacity="0.8" paint-order="stroke">1/7</text><text x="955" y="244" font-size="10.5" fill="#555" fill-opacity="1" font-weight="normal" text-anchor="start" stroke="#fdfbf5" stroke-width="1.6" stroke-opacity="0.8" paint-order="stroke">23А</text><text x="964" y="302" font-size="10.5" fill="#555" fill-opacity="1" font-weight="normal" text-anchor="start" stroke="#fdfbf5" stroke-width="1.6" stroke-opacity="0.8" paint-order="stroke">6А</text><text x="1022" y="305" font-size="10.5" fill="#555" fill-opacity="1" font-weight="normal" text-anchor="start" stroke="#fdfbf5" stroke-width="1.6" stroke-opacity="0.8" paint-order="stroke">4Б</text><text x="1077" y="257" font-size="10.5" fill="#555" fill-opacity="1" font-weight="normal" text-anchor="start" stroke="#fdfbf5" stroke-width="1.6" stroke-opacity="0.8" paint-order="stroke">2</text><text x="1075" y="307" font-size="10.5" fill="#555" fill-opacity="1" font-weight="normal" text-anchor="start" stroke="#fdfbf5" stroke-width="1.6" stroke-opacity="0.8" paint-order="stroke">4</text><text x="1090" y="323" font-size="12.3" fill="#555" fill-opacity="1" font-weight="normal" text-anchor="start" transform="rotate(90 1090 323)" stroke="#fdfbf5" stroke-width="1.6" stroke-opacity="0.8" paint-order="stroke">Литейная ул.</text><text x="972" y="358.5" font-size="10.5" fill="#555" fill-opacity="1" font-weight="normal" text-anchor="start" stroke="#fdfbf5" stroke-width="1.6" stroke-opacity="0.8" paint-order="stroke">12</text><text x="1003" y="358.5" font-size="10.5" fill="#555" fill-opacity="1" font-weight="normal" text-anchor="start" stroke="#fdfbf5" stroke-width="1.6" stroke-opacity="0.8" paint-order="stroke">10</text><text x="1057" y="358.5" font-size="10.5" fill="#555" fill-opacity="1" font-weight="normal" text-anchor="start" stroke="#fdfbf5" stroke-width="1.6" stroke-opacity="0.8" paint-order="stroke">6/8</text><text x="998" y="380" font-size="12" fill="#555" fill-opacity="1" font-weight="normal" text-anchor="start" stroke="#fdfbf5" stroke-width="1.6" stroke-opacity="0.8" paint-order="stroke">ул. Чистова</text><text x="939" y="386" font-size="11" fill="#333" fill-opacity="1" font-weight="normal" text-anchor="start" stroke="#fdfbf5" stroke-width="1.6" stroke-opacity="0.8" paint-order="stroke">Дикси</text><text x="980" y="433" font-size="10.5" fill="#555" fill-opacity="1" font-weight="normal" text-anchor="start" stroke="#fdfbf5" stroke-width="1.6" stroke-opacity="0.8" paint-order="stroke">17А</text><text x="1065" y="438" font-size="10.5" fill="#555" fill-opacity="1" font-weight="normal" text-anchor="start" stroke="#fdfbf5" stroke-width="1.6" stroke-opacity="0.8" paint-order="stroke">11/8</text><text x="925.5" y="456" font-size="12.3" fill="#555" fill-opacity="1" font-weight="normal" text-anchor="start" transform="rotate(90 925.5 456)" stroke="#fdfbf5" stroke-width="1.6" stroke-opacity="0.8" paint-order="stroke">Народная ул.</text><text x="947" y="482" font-size="10.5" fill="#555" fill-opacity="1" font-weight="normal" text-anchor="start" stroke="#fdfbf5" stroke-width="1.6" stroke-opacity="0.8" paint-order="stroke">5</text><text x="1013" y="548.5" font-size="10.5" fill="#555" fill-opacity="1" font-weight="normal" text-anchor="start" stroke="#fdfbf5" stroke-width="1.6" stroke-opacity="0.8" paint-order="stroke">12А</text><text x="977" y="556" font-size="10.5" fill="#555" fill-opacity="1" font-weight="normal" text-anchor="start" stroke="#fdfbf5" stroke-width="1.6" stroke-opacity="0.8" paint-order="stroke">11</text><text x="933" y="577" font-size="11" fill="#333" fill-opacity="1" font-weight="normal" text-anchor="start" stroke="#fdfbf5" stroke-width="1.6" stroke-opacity="0.8" paint-order="stroke">Пятёрочка</text><text x="920" y="571" font-size="10" fill="#333" fill-opacity="1" font-weight="normal" text-anchor="start" stroke="#fdfbf5" stroke-width="1.6" stroke-opacity="0.8" paint-order="stroke">т</text><text x="1105" y="565" font-size="10.5" fill="#555" fill-opacity="1" font-weight="normal" text-anchor="start" stroke="#fdfbf5" stroke-width="1.6" stroke-opacity="0.8" paint-order="stroke">13В</text><text x="1131" y="505" font-size="10.5" fill="#555" fill-opacity="1" font-weight="normal" text-anchor="start" stroke="#fdfbf5" stroke-width="1.6" stroke-opacity="0.8" paint-order="stroke">13А</text><text x="920" y="605.5" font-size="13.6" fill="#555" fill-opacity="1" font-weight="normal" text-anchor="start" stroke="#fdfbf5" stroke-width="1.6" stroke-opacity="0.8" paint-order="stroke">Индустриальная ул.</text><text x="1075" y="489" font-size="10.5" fill="#555" fill-opacity="1" font-weight="normal" text-anchor="start" stroke="#fdfbf5" stroke-width="1.6" stroke-opacity="0.8" paint-order="stroke">10</text><text x="975" y="621.5" font-size="10.5" fill="#555" fill-opacity="1" font-weight="normal" text-anchor="start" stroke="#fdfbf5" stroke-width="1.6" stroke-opacity="0.8" paint-order="stroke">15</text><text x="1054" y="619.5" font-size="10.5" fill="#555" fill-opacity="1" font-weight="normal" text-anchor="start" stroke="#fdfbf5" stroke-width="1.6" stroke-opacity="0.8" paint-order="stroke">11</text><g filter="url(#msh)"><path d="M1072 407 L1055.5 386.5 A21.2 21.2 0 1 1 1088.5 386.5 Z" fill="#16adaa"/></g>
<circle cx="1072" cy="372" r="15.5" fill="#fff"/>
<g fill="none" stroke="#16adaa" stroke-width="1"><rect x="1065.3" y="363.5" width="10.2" height="17.5"/><rect x="1075.5" y="369.5" width="5" height="11.5"/></g>
<g fill="#16adaa"><rect x="1067" y="366" width="1.3" height="2"/><rect x="1069.6" y="366" width="1.3" height="2"/><rect x="1072.2" y="366" width="1.3" height="2"/>
<rect x="1067" y="370" width="1.3" height="2"/><rect x="1069.6" y="370" width="1.3" height="2"/><rect x="1072.2" y="370" width="1.3" height="2"/>
<rect x="1067" y="374" width="1.3" height="2"/><rect x="1069.6" y="374" width="1.3" height="2"/><rect x="1072.2" y="374" width="1.3" height="2"/>
<rect x="1077.3" y="372" width="1.3" height="2"/><rect x="1077.3" y="376" width="1.3" height="2"/></g></svg></div>
</body></html>
